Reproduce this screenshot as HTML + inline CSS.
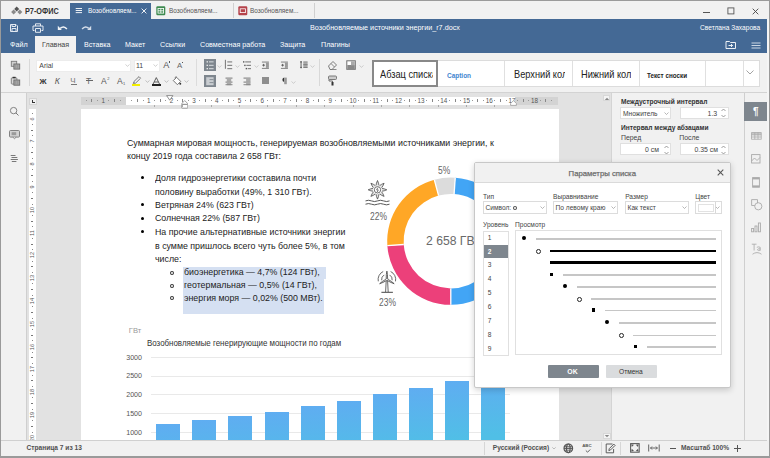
<!DOCTYPE html>
<html><head><meta charset="utf-8">
<style>
*{margin:0;padding:0;box-sizing:border-box}
html,body{width:770px;height:458px;overflow:hidden;background:#f1f1f1;font-family:"Liberation Sans",sans-serif;position:relative}
.a{position:absolute}
.t{position:absolute;white-space:nowrap;line-height:1}
</style></head><body>
<div class="a" style="left:0px;top:0px;width:770px;height:19px;background:#f1f1f1;"></div>
<div class="a" style="left:0px;top:0px;width:770px;height:1px;background:#9a9a9a;"></div>
<svg class="a" style="left:10px;top:5px;" width="14" height="11" viewBox="0 0 14 11"><path d="M6.7 1.5 L9.2 4 L6.7 6.5 L4.2 4Z" fill="#555"/><path d="M3.6 4.6 L6.1 7.1 L3.6 9.6 L1.1 7.1Z" fill="#8a8a8a"/><path d="M9.8 4.6 L12.3 7.1 L9.8 9.6 L7.3 7.1Z" fill="#8a8a8a"/></svg>
<div class="t" style="left:24.5px;top:7.00px;font-size:8.4px;color:#333;font-weight:700;transform:scaleX(0.87);transform-origin:0 0;">Р7-ОФИС</div>
<div class="a" style="left:70px;top:3px;width:81px;height:16px;background:#446995;"></div>
<svg class="a" style="left:75px;top:7px;" width="8" height="7" viewBox="0 0 8 7"><rect x="0.7" y="1" width="6.3" height="0.9" fill="#fff"/><rect x="0.7" y="3.1" width="6.3" height="0.9" fill="#fff"/><rect x="0.7" y="5.2" width="6.3" height="0.9" fill="#fff"/></svg>
<div class="t" style="left:87.5px;top:8.00px;font-size:6.8px;color:#fff;font-weight:400;transform:scaleX(0.94);transform-origin:0 0;">Возобновляем...</div>
<svg class="a" style="left:141px;top:8px;" width="6" height="6" viewBox="0 0 6 6"><path d="M0.6 0.6L5.4 5.4M5.4 0.6L0.6 5.4" stroke="#fff" stroke-width="0.9"/></svg>
<svg class="a" style="left:156px;top:6px;" width="10" height="10" viewBox="0 0 10 10"><rect x="0.3" y="0.3" width="9" height="9" rx="1.2" fill="#3e8a50"/><g fill="none" stroke="#fff" stroke-width="0.8"><rect x="2" y="2.5" width="5.6" height="4.6"/><path d="M2 4.8H7.6M4.8 2.5V7.1"/></g></svg>
<div class="t" style="left:168.8px;top:8.00px;font-size:6.8px;color:#555;font-weight:400;transform:scaleX(0.94);transform-origin:0 0;">Возобновляем...</div>
<div class="a" style="left:233px;top:3px;width:1px;height:15px;background:#d0d0d0;"></div>
<svg class="a" style="left:237.5px;top:6px;" width="10" height="10" viewBox="0 0 10 10"><rect x="0.3" y="0.3" width="9" height="9" rx="1.2" fill="#b5434b"/><rect x="2.2" y="2.8" width="5.2" height="3.8" fill="none" stroke="#fff" stroke-width="0.8"/></svg>
<div class="t" style="left:250.3px;top:8.00px;font-size:6.8px;color:#555;font-weight:400;transform:scaleX(0.94);transform-origin:0 0;">Возобновляем...</div>
<div class="a" style="left:314px;top:3px;width:1px;height:15px;background:#d0d0d0;"></div>
<div class="a" style="left:703px;top:11.5px;width:6.5px;height:0.9px;background:#555;"></div>
<svg class="a" style="left:727px;top:6.5px;" width="8" height="8" viewBox="0 0 8 8"><rect x="0.9" y="0.9" width="6" height="6" fill="none" stroke="#555" stroke-width="0.9"/></svg>
<svg class="a" style="left:752px;top:7.5px;" width="7" height="7" viewBox="0 0 7 7"><path d="M0.7 0.7L6.3 6.3M6.3 0.7L0.7 6.3" stroke="#444" stroke-width="0.9"/></svg>
<div class="a" style="left:0px;top:0px;width:1px;height:458px;background:#9a9a9a;"></div>
<div class="a" style="left:769px;top:0px;width:1px;height:458px;background:#9a9a9a;"></div>
<div class="a" style="left:767px;top:19px;width:2px;height:421px;background:#f5f5f5;"></div>
<div class="a" style="left:1px;top:19px;width:766px;height:34px;background:#446995;"></div>
<svg class="a" style="left:9px;top:23px;" width="10" height="10" viewBox="0 0 10 10"><g fill="none" stroke="#e3e9f1" stroke-width="1"><path d="M1.5 1.5H7L8.5 3V8.5H1.5Z"/><path d="M3 1.5V3.5H6.5V1.5"/><path d="M3 8.5V5.5H7V8.5"/></g></svg>
<svg class="a" style="left:32px;top:23px;" width="13" height="10" viewBox="0 0 13 10"><g fill="none" stroke="#e3e9f1" stroke-width="1"><path d="M3.5 3V0.8H8.5V3"/><path d="M2.5 7.5H1V3H11V7.5H9.5"/><path d="M3.5 5.5H8.5V9.3H3.5Z"/></g></svg>
<svg class="a" style="left:57px;top:25px;" width="11" height="6" viewBox="0 0 11 6"><path d="M3.2 3.4 Q6.6 0.2 9.9 3.9" fill="none" stroke="#f0f3f7" stroke-width="1.5"/><path d="M0.8 0.8 L0.8 4.9 L4.8 4.9Z" fill="#f0f3f7"/></svg>
<svg class="a" style="left:81px;top:25px;" width="11" height="6" viewBox="0 0 11 6"><path d="M7.8 3.4 Q4.4 0.2 1.1 3.9" fill="none" stroke="#d3dce8" stroke-width="1.5"/><path d="M10.2 0.8 L10.2 4.9 L6.2 4.9Z" fill="#d3dce8"/></svg>
<div class="t" style="left:310px;top:24.00px;font-size:7.22px;color:#fff;font-weight:400;">Возобновляемые источники энергии_r7.docx</div>
<div class="t" style="left:700px;top:25.00px;font-size:6.6px;color:#fff;font-weight:400;">Светлана Захарова</div>
<div class="a" style="left:35px;top:36px;width:41px;height:17px;background:#f1f1f1;"></div>
<div class="t" style="left:9.7px;top:41.00px;font-size:7.6px;color:#fff;font-weight:400;transform:scaleX(0.94);transform-origin:0 0;">Файл</div>
<div class="t" style="left:41.8px;top:41.00px;font-size:7.6px;color:#444;font-weight:400;transform:scaleX(0.94);transform-origin:0 0;">Главная</div>
<div class="t" style="left:83.5px;top:41.00px;font-size:7.6px;color:#fff;font-weight:400;transform:scaleX(0.94);transform-origin:0 0;">Вставка</div>
<div class="t" style="left:125px;top:41.00px;font-size:7.6px;color:#fff;font-weight:400;transform:scaleX(0.94);transform-origin:0 0;">Макет</div>
<div class="t" style="left:160px;top:41.00px;font-size:7.6px;color:#fff;font-weight:400;transform:scaleX(0.94);transform-origin:0 0;">Ссылки</div>
<div class="t" style="left:200px;top:41.00px;font-size:7.6px;color:#fff;font-weight:400;transform:scaleX(0.94);transform-origin:0 0;">Совместная работа</div>
<div class="t" style="left:280px;top:41.00px;font-size:7.6px;color:#fff;font-weight:400;transform:scaleX(0.94);transform-origin:0 0;">Защита</div>
<div class="t" style="left:320.5px;top:41.00px;font-size:7.6px;color:#fff;font-weight:400;transform:scaleX(0.94);transform-origin:0 0;">Плагины</div>
<svg class="a" style="left:725px;top:40px;" width="12" height="10" viewBox="0 0 12 10"><path d="M1 1.5H4.5L5.5 2.5H10.5V8.5H1Z" fill="none" stroke="#fff" stroke-width="0.9"/><path d="M3.5 5.5H7.5M6 4L7.5 5.5L6 7" fill="none" stroke="#fff" stroke-width="0.9"/></svg>
<svg class="a" style="left:750.5px;top:41.5px;" width="10" height="8" viewBox="0 0 10 8"><path d="M0.5 1H9.5M0.5 3.5H9.5M0.5 6H9.5" stroke="#eef2f7" stroke-width="0.8"/></svg>
<div class="a" style="left:1px;top:53px;width:766px;height:39px;background:#f1f1f1;"></div>
<div class="a" style="left:1px;top:92px;width:766px;height:1px;background:#d3d3d3;"></div>
<svg class="a" style="left:10px;top:60px;" width="11" height="10" viewBox="0 0 11 10"><rect x="1.3" y="1.3" width="5.4" height="5" fill="#d0d0d0" stroke="#7a7a7a" stroke-width="0.9"/><rect x="3.9" y="4" width="5.8" height="5.1" fill="#a8a8a8" stroke="#6a6a6a" stroke-width="0.9"/><path d="M5.7 4.5V8.6M7.7 4.5V8.6" stroke="#8a8a8a" stroke-width="0.6"/></svg>
<svg class="a" style="left:10px;top:75.5px;" width="11" height="10" viewBox="0 0 11 10"><rect x="1.3" y="1.8" width="5.6" height="6.3" rx="0.8" fill="#d8d8d8" stroke="#7a7a7a" stroke-width="0.9"/><rect x="2.6" y="0.8" width="3" height="1.4" fill="#333"/><rect x="3.9" y="4" width="5.8" height="5.2" fill="#a8a8a8" stroke="#6a6a6a" stroke-width="0.9"/><path d="M5.7 4.5V8.7M7.7 4.5V8.7" stroke="#8a8a8a" stroke-width="0.6"/></svg>
<div class="a" style="left:29px;top:59px;width:1px;height:27px;background:#d8d8d8;"></div>
<div class="a" style="left:36px;top:59.5px;width:95px;height:12px;background:#fff;border:1px solid #ececec"></div>
<div class="t" style="left:39.3px;top:63.00px;font-size:6.9px;color:#444;font-weight:400;">Arial</div>
<svg class="a" style="left:125px;top:64px;" width="5" height="3" viewBox="0 0 5 3"><path d="M0.5 0.5L2.5 2.3L4.5 0.5" fill="none" stroke="#bbb" stroke-width="0.7"/></svg>
<div class="a" style="left:133.5px;top:59.5px;width:26px;height:12px;background:#fff;border:1px solid #ececec"></div>
<div class="t" style="left:136px;top:63.00px;font-size:6.9px;color:#444;font-weight:400;">11</div>
<svg class="a" style="left:153px;top:64px;" width="5" height="3" viewBox="0 0 5 3"><path d="M0.5 0.5L2.5 2.3L4.5 0.5" fill="none" stroke="#bbb" stroke-width="0.7"/></svg>
<div class="t" style="left:163.3px;top:61.00px;font-size:9px;color:#555;font-weight:400;">A</div>
<div class="a" style="left:168.7px;top:61.4px;width:1.5px;height:1.5px;background:#555;"></div>
<div class="t" style="left:177px;top:62.00px;font-size:7.8px;color:#666;font-weight:400;">A</div>
<div class="a" style="left:182px;top:61.9px;width:1.3px;height:1.3px;background:#555;"></div>
<div class="a" style="left:196px;top:59px;width:1px;height:27px;background:#dcdcdc;"></div>
<div class="t" style="left:39.5px;top:78.00px;font-size:7.8px;color:#333;font-weight:700;">Ж</div>
<div class="t" style="left:54.8px;top:77.00px;font-size:8.5px;color:#555;font-weight:400;font-style:italic">К</div>
<div class="t" style="left:70.3px;top:77.00px;font-size:8px;color:#777;font-weight:400;">Ч</div>
<div class="a" style="left:70.5px;top:83.8px;width:6.2px;height:0.9px;background:#777;"></div>
<div class="t" style="left:86px;top:77.00px;font-size:8.3px;color:#666;font-weight:400;">Т</div>
<div class="a" style="left:85.5px;top:80.2px;width:7.5px;height:0.9px;background:#666;"></div>
<div class="t" style="left:101px;top:77.00px;font-size:8.5px;color:#555;font-weight:400;">A</div>
<div class="t" style="left:107.2px;top:77.00px;font-size:4px;color:#555;font-weight:400;">2</div>
<div class="t" style="left:117px;top:77.00px;font-size:8.5px;color:#555;font-weight:400;">A</div>
<div class="t" style="left:123px;top:82.00px;font-size:4px;color:#555;font-weight:400;">1</div>
<svg class="a" style="left:131px;top:75px;" width="12" height="10" viewBox="0 0 12 10"><path d="M2.6 8.3 L2.9 6.6 L8 1.6 L9.6 3.2 L4.5 8.2 Z" fill="none" stroke="#6e6e6e" stroke-width="0.9"/><path d="M2.2 8.6 L3.2 7.6" stroke="#6e6e6e" stroke-width="0.9"/></svg>
<div class="a" style="left:132.3px;top:84.2px;width:8.2px;height:1.7px;background:#f2ee00;"></div>
<svg class="a" style="left:144.5px;top:80px;" width="5" height="3" viewBox="0 0 5 3"><path d="M0.5 0.5L2.5 2.3L4.5 0.5" fill="none" stroke="#aaa" stroke-width="0.7"/></svg>
<svg class="a" style="left:152px;top:76.8px;" width="9" height="8" viewBox="0 0 9 8"><path d="M0.8 7.6 L4.3 0.6 L7.8 7.6 M2.2 5 H6.4" fill="none" stroke="#555" stroke-width="0.95"/></svg>
<div class="a" style="left:152px;top:84.2px;width:9px;height:1.6px;background:#222;"></div>
<svg class="a" style="left:164px;top:80px;" width="5" height="3" viewBox="0 0 5 3"><path d="M0.5 0.5L2.5 2.3L4.5 0.5" fill="none" stroke="#aaa" stroke-width="0.7"/></svg>
<svg class="a" style="left:171.5px;top:75.5px;" width="11" height="10" viewBox="0 0 11 10"><path d="M1.3 4.6 L4.6 1.3 L8.7 5.4 L5.4 8.7 Z" fill="#fff" stroke="#6e6e6e" stroke-width="0.95"/><path d="M3.3 2.6 Q2.5 0.3 4.8 0.8" fill="none" stroke="#6e6e6e" stroke-width="0.8"/><circle cx="8.3" cy="7.7" r="0.95" fill="#333"/></svg>
<svg class="a" style="left:184px;top:80px;" width="5" height="3" viewBox="0 0 5 3"><path d="M0.5 0.5L2.5 2.3L4.5 0.5" fill="none" stroke="#aaa" stroke-width="0.7"/></svg>
<div class="a" style="left:204px;top:59px;width:12px;height:12px;background:#7e868e;"></div>
<svg class="a" style="left:204px;top:59px;" width="12" height="12" viewBox="0 0 12 12"><g fill="#f4f4f4"><rect x="2.6" y="2.2" width="1.3" height="1.3"/><rect x="2.6" y="5.7" width="1.3" height="1.3"/><rect x="2.6" y="9" width="1.3" height="1.3"/></g><g fill="#d2d6da"><rect x="5" y="2.3" width="4.6" height="1.1"/><rect x="5" y="5.8" width="4.6" height="1.1"/><rect x="5" y="9.1" width="4.6" height="1.1"/></g></svg>
<svg class="a" style="left:216.5px;top:65px;" width="5" height="3" viewBox="0 0 5 3"><path d="M0.5 0.5L2.5 2.3L4.5 0.5" fill="none" stroke="#bbb" stroke-width="0.7"/></svg>
<svg class="a" style="left:224px;top:59px;" width="10" height="12" viewBox="0 0 10 12"><rect x="0.9" y="0.8" width="0.9" height="9" fill="#666"/><g fill="#888"><rect x="3.3" y="2.3" width="4.9" height="1.2"/><rect x="3.3" y="5.8" width="4.9" height="1.2"/><rect x="3.3" y="9" width="4.9" height="1.2"/></g></svg>
<svg class="a" style="left:234.8px;top:65px;" width="5" height="3" viewBox="0 0 5 3"><path d="M0.5 0.5L2.5 2.3L4.5 0.5" fill="none" stroke="#bbb" stroke-width="0.7"/></svg>
<svg class="a" style="left:242px;top:59px;" width="10" height="12" viewBox="0 0 10 12"><g fill="#555"><rect x="1" y="2.2" width="1.4" height="1.4"/><rect x="2.2" y="5.7" width="1.4" height="1.4"/><rect x="3.7" y="8.9" width="1.4" height="1.4"/></g><g fill="#888"><rect x="3.2" y="2.3" width="5.8" height="1.2"/><rect x="4.4" y="5.8" width="4.6" height="1.2"/><rect x="5.8" y="9" width="3.2" height="1.2"/></g></svg>
<svg class="a" style="left:253.5px;top:65px;" width="5" height="3" viewBox="0 0 5 3"><path d="M0.5 0.5L2.5 2.3L4.5 0.5" fill="none" stroke="#bbb" stroke-width="0.7"/></svg>
<svg class="a" style="left:261px;top:61px;" width="8" height="9" viewBox="0 0 8 9"><rect x="0.9" y="0.6" width="7" height="0.9" fill="#777"/><rect x="0.9" y="6.9" width="7" height="0.9" fill="#777"/><rect x="4.9" y="1.5" width="3" height="5.4" fill="#9a9a9a"/><path d="M1.3 4.2H3.9M2.6 2.9V5.5" stroke="#555" stroke-width="0.9"/></svg>
<svg class="a" style="left:280px;top:61px;" width="8" height="9" viewBox="0 0 8 9"><rect x="0.9" y="0.6" width="7" height="0.9" fill="#777"/><rect x="0.9" y="6.9" width="7" height="0.9" fill="#777"/><rect x="4.9" y="1.5" width="3" height="5.4" fill="#9a9a9a"/><path d="M1.3 4.2H3.9M2.6 2.9V5.5" stroke="#555" stroke-width="0.9"/></svg>
<svg class="a" style="left:299.5px;top:61px;" width="9" height="8" viewBox="0 0 9 8"><rect x="0.6" y="0.5" width="0.9" height="6.5" fill="#555"/><circle cx="1.05" cy="0.9" r="0.8" fill="#555"/><circle cx="1.05" cy="6.6" r="0.8" fill="#555"/><rect x="3.3" y="1.3" width="4.3" height="5" fill="#aaa"/><g fill="#777"><rect x="3.3" y="0.5" width="4.3" height="0.9"/><rect x="3.3" y="3.3" width="4.3" height="0.9"/><rect x="3.3" y="6.1" width="4.3" height="0.9"/></g></svg>
<svg class="a" style="left:310px;top:65px;" width="5" height="3" viewBox="0 0 5 3"><path d="M0.5 0.5L2.5 2.3L4.5 0.5" fill="none" stroke="#bbb" stroke-width="0.7"/></svg>
<div class="a" style="left:204px;top:74.5px;width:12px;height:12px;background:#7e868e;"></div>
<svg class="a" style="left:204px;top:74.5px;" width="12" height="12" viewBox="0 0 12 12"><rect x="2.2" y="2.2" width="7.4" height="8" fill="#c9cdd1"/><g fill="#8e959c"><rect x="5.5" y="4" width="4.1" height="1.1"/><rect x="5.5" y="7" width="4.1" height="1.1"/></g></svg>
<svg class="a" style="left:224.5px;top:76.5px;" width="8" height="9" viewBox="0 0 8 9"><rect x="0.5" y="0.6" width="7" height="1" fill="#777"/><rect x="1.8" y="1.6" width="4.4" height="3" fill="#aaa"/><rect x="0.5" y="4.6" width="7" height="1" fill="#777"/><rect x="1.8" y="5.6" width="4.4" height="2.6" fill="#aaa"/><rect x="0.5" y="7.2" width="7" height="1" fill="#888"/></svg>
<svg class="a" style="left:243.3px;top:76.5px;" width="8" height="9" viewBox="0 0 8 9"><rect x="0.5" y="0.6" width="7" height="1" fill="#777"/><rect x="3.1" y="1.6" width="4.4" height="3" fill="#aaa"/><rect x="0.5" y="4.6" width="7" height="1" fill="#777"/><rect x="3.1" y="5.6" width="4.4" height="2.6" fill="#aaa"/><rect x="0.5" y="7.2" width="7" height="1" fill="#888"/></svg>
<div class="a" style="left:262.3px;top:77.4px;width:6.6px;height:6.6px;background:#8e8e8e;"></div>
<svg class="a" style="left:281px;top:76.8px;" width="7" height="8" viewBox="0 0 7 8"><path d="M3.2 0.6 A2.3 2.3 0 0 0 3.2 5.1 Z" fill="#333"/><rect x="3.2" y="0.6" width="2.6" height="6.6" fill="#9a9a9a"/></svg>
<svg class="a" style="left:291px;top:80.5px;" width="5" height="3" viewBox="0 0 5 3"><path d="M0.5 0.5L2.5 2.3L4.5 0.5" fill="none" stroke="#bbb" stroke-width="0.7"/></svg>
<div class="a" style="left:318.5px;top:59px;width:1px;height:27px;background:#d8d8d8;"></div>
<svg class="a" style="left:327px;top:60px;" width="11" height="10" viewBox="0 0 11 10"><path d="M1.5 6 L6 1.5 L9.5 5 L5 9.5 L3 9.5 Z" fill="none" stroke="#6e6e6e" stroke-width="0.9"/><path d="M4 3.5L7.5 7" stroke="#6e6e6e" stroke-width="0.8"/><path d="M5 9.5H9.5" stroke="#6e6e6e" stroke-width="0.8"/></svg>
<svg class="a" style="left:346px;top:60px;" width="10" height="10" viewBox="0 0 10 10"><rect x="0.8" y="0.8" width="8.5" height="8.5" fill="#fff" stroke="#6e6e6e" stroke-width="1"/><rect x="1.3" y="5" width="7.5" height="4" fill="#888"/><rect x="5" y="1.3" width="3.8" height="4" fill="#aaa"/></svg>
<svg class="a" style="left:358.5px;top:64.5px;" width="5" height="3" viewBox="0 0 5 3"><path d="M0.5 0.5L2.5 2.3L4.5 0.5" fill="none" stroke="#bbb" stroke-width="0.7"/></svg>
<svg class="a" style="left:327px;top:75px;" width="11" height="11" viewBox="0 0 11 11"><rect x="1.5" y="1" width="8" height="3.5" rx="1" fill="#ccc" stroke="#6e6e6e" stroke-width="0.9"/><path d="M2 4.5V6H5.5V10" fill="none" stroke="#6e6e6e" stroke-width="1"/><rect x="4.5" y="7" width="2" height="3.5" fill="#333"/></svg>
<div class="a" style="left:371.5px;top:59.5px;width:388px;height:27px;background:#fff;border:1px solid #dcdcdc"></div>
<div class="a" style="left:371.5px;top:59.5px;width:66px;height:27px;border:2px solid #888;background:#fff"></div>
<div class="a" style="left:373.5px;top:61px;width:59.5px;height:24px;overflow:hidden"><div class="t" style="left:6.8px;top:9px;font-size:10.2px;color:#222;transform:scaleX(0.905);transform-origin:0 0">Абзац списка</div></div>
<div class="t" style="left:447px;top:73.00px;font-size:6.6px;color:#3f86d0;font-weight:700;transform:scaleX(0.98);transform-origin:0 0;">Caption</div>
<div class="a" style="left:504px;top:60.5px;width:1px;height:25px;background:#e0e0e0;"></div>
<div class="a" style="left:571.5px;top:60.5px;width:1px;height:25px;background:#e0e0e0;"></div>
<div class="a" style="left:638.5px;top:60.5px;width:1px;height:25px;background:#e0e0e0;"></div>
<div class="a" style="left:705px;top:60.5px;width:1px;height:25px;background:#e0e0e0;"></div>
<div class="a" style="left:742.5px;top:60.5px;width:1px;height:25px;background:#e0e0e0;"></div>
<div class="a" style="left:505px;top:61px;width:60px;height:24px;overflow:hidden"><div class="t" style="left:8.6px;top:9px;font-size:10.2px;color:#222;transform:scaleX(0.905);transform-origin:0 0">Верхний колонтитул</div></div>
<div class="a" style="left:572.5px;top:61px;width:58.5px;height:24px;overflow:hidden"><div class="t" style="left:8px;top:9px;font-size:10.2px;color:#222;transform:scaleX(0.905);transform-origin:0 0">Нижний колонтитул</div></div>
<div class="t" style="left:647px;top:73.00px;font-size:6.3px;color:#222;font-weight:700;">Текст сноски</div>
<svg class="a" style="left:746px;top:70px;" width="8" height="5" viewBox="0 0 8 5"><path d="M0.5 0.5L4 4L7.5 0.5" fill="none" stroke="#999" stroke-width="0.9"/></svg>
<div class="a" style="left:1px;top:93px;width:25px;height:347px;background:#f1f1f1;"></div>
<div class="a" style="left:26px;top:93px;width:1px;height:347px;background:#cfcfcf;"></div>
<svg class="a" style="left:9px;top:106px;" width="11" height="11" viewBox="0 0 11 11"><circle cx="4.6" cy="4.6" r="3.2" fill="none" stroke="#777" stroke-width="0.9"/><path d="M6.9 6.9L9.5 9.5" stroke="#777" stroke-width="1"/></svg>
<svg class="a" style="left:8px;top:129px;" width="13" height="11" viewBox="0 0 13 11"><rect x="1.5" y="1.5" width="10" height="6.6" rx="1" fill="#d2d2d2" stroke="#777" stroke-width="0.9"/><path d="M4.8 8.1L6.5 9.7L8.2 8.1" fill="#d2d2d2" stroke="#777" stroke-width="0.8"/><rect x="3.6" y="3.2" width="4.6" height="3" fill="#9a9a9a"/></svg>
<svg class="a" style="left:9px;top:153px;" width="12" height="11" viewBox="0 0 12 11"><g fill="#6a6a6a"><rect x="1.7" y="2" width="4.8" height="0.9"/><rect x="2.5" y="4" width="5.8" height="0.9"/><rect x="1.7" y="6" width="7.2" height="0.9"/><rect x="2.8" y="8" width="4.6" height="0.9"/></g></svg>
<div class="a" style="left:27px;top:93px;width:585px;height:347px;background:#e2e2e2;"></div>
<div class="a" style="left:29px;top:97.5px;width:7.5px;height:7.5px;background:#f1f1f1;border:1px solid #d4d4d4"></div>
<div class="a" style="left:31.5px;top:100px;width:1px;height:3px;background:#333;"></div>
<div class="a" style="left:31.5px;top:102.3px;width:3px;height:1px;background:#333;"></div>
<div class="a" style="left:29px;top:108.5px;width:6.5px;height:331.5px;background:#fff;"></div>
<div class="a" style="left:29px;top:108.5px;width:6.5px;height:0px;background:#fff;"></div>
<div class="a" style="left:31.7px;top:112.50249999999998px;width:1.2px;height:1px;background:#888;"></div>
<div class="a" style="left:26.20px;top:115.70px;width:12px;height:6px;transform:rotate(-90deg);font-size:5.6px;line-height:6px;text-align:center;color:#555;white-space:nowrap">6</div>
<div class="a" style="left:31.7px;top:123.8975px;width:1.2px;height:1px;background:#888;"></div>
<div class="a" style="left:31.2px;top:129.59499999999997px;width:2.2px;height:1px;background:#777;"></div>
<div class="a" style="left:31.7px;top:135.29249999999996px;width:1.2px;height:1px;background:#888;"></div>
<div class="a" style="left:26.20px;top:138.49px;width:12px;height:6px;transform:rotate(-90deg);font-size:5.6px;line-height:6px;text-align:center;color:#555;white-space:nowrap">7</div>
<div class="a" style="left:31.7px;top:146.6875px;width:1.2px;height:1px;background:#888;"></div>
<div class="a" style="left:31.2px;top:152.385px;width:2.2px;height:1px;background:#777;"></div>
<div class="a" style="left:31.7px;top:158.08249999999998px;width:1.2px;height:1px;background:#888;"></div>
<div class="a" style="left:26.20px;top:161.28px;width:12px;height:6px;transform:rotate(-90deg);font-size:5.6px;line-height:6px;text-align:center;color:#555;white-space:nowrap">8</div>
<div class="a" style="left:31.7px;top:169.47749999999996px;width:1.2px;height:1px;background:#888;"></div>
<div class="a" style="left:31.2px;top:175.175px;width:2.2px;height:1px;background:#777;"></div>
<div class="a" style="left:31.7px;top:180.8725px;width:1.2px;height:1px;background:#888;"></div>
<div class="a" style="left:26.20px;top:184.07px;width:12px;height:6px;transform:rotate(-90deg);font-size:5.6px;line-height:6px;text-align:center;color:#555;white-space:nowrap">9</div>
<div class="a" style="left:31.7px;top:192.26749999999998px;width:1.2px;height:1px;background:#888;"></div>
<div class="a" style="left:31.2px;top:197.96499999999997px;width:2.2px;height:1px;background:#777;"></div>
<div class="a" style="left:31.7px;top:203.66249999999997px;width:1.2px;height:1px;background:#888;"></div>
<div class="a" style="left:26.20px;top:206.86px;width:12px;height:6px;transform:rotate(-90deg);font-size:5.6px;line-height:6px;text-align:center;color:#555;white-space:nowrap">10</div>
<div class="a" style="left:31.7px;top:215.0575px;width:1.2px;height:1px;background:#888;"></div>
<div class="a" style="left:31.2px;top:220.755px;width:2.2px;height:1px;background:#777;"></div>
<div class="a" style="left:31.7px;top:226.4525px;width:1.2px;height:1px;background:#888;"></div>
<div class="a" style="left:26.20px;top:229.65px;width:12px;height:6px;transform:rotate(-90deg);font-size:5.6px;line-height:6px;text-align:center;color:#555;white-space:nowrap">11</div>
<div class="a" style="left:31.7px;top:237.84749999999997px;width:1.2px;height:1px;background:#888;"></div>
<div class="a" style="left:31.2px;top:243.54499999999996px;width:2.2px;height:1px;background:#777;"></div>
<div class="a" style="left:31.7px;top:249.24249999999995px;width:1.2px;height:1px;background:#888;"></div>
<div class="a" style="left:26.20px;top:252.44px;width:12px;height:6px;transform:rotate(-90deg);font-size:5.6px;line-height:6px;text-align:center;color:#555;white-space:nowrap">12</div>
<div class="a" style="left:31.7px;top:260.6375px;width:1.2px;height:1px;background:#888;"></div>
<div class="a" style="left:31.2px;top:266.335px;width:2.2px;height:1px;background:#777;"></div>
<div class="a" style="left:31.7px;top:272.03249999999997px;width:1.2px;height:1px;background:#888;"></div>
<div class="a" style="left:26.20px;top:275.23px;width:12px;height:6px;transform:rotate(-90deg);font-size:5.6px;line-height:6px;text-align:center;color:#555;white-space:nowrap">13</div>
<div class="a" style="left:31.7px;top:283.42749999999995px;width:1.2px;height:1px;background:#888;"></div>
<div class="a" style="left:31.2px;top:289.12499999999994px;width:2.2px;height:1px;background:#777;"></div>
<div class="a" style="left:31.7px;top:294.8225px;width:1.2px;height:1px;background:#888;"></div>
<div class="a" style="left:26.20px;top:298.02px;width:12px;height:6px;transform:rotate(-90deg);font-size:5.6px;line-height:6px;text-align:center;color:#555;white-space:nowrap">14</div>
<div class="a" style="left:31.7px;top:306.2175px;width:1.2px;height:1px;background:#888;"></div>
<div class="a" style="left:31.2px;top:311.91499999999996px;width:2.2px;height:1px;background:#777;"></div>
<div class="a" style="left:31.7px;top:317.61249999999995px;width:1.2px;height:1px;background:#888;"></div>
<div class="a" style="left:26.20px;top:320.81px;width:12px;height:6px;transform:rotate(-90deg);font-size:5.6px;line-height:6px;text-align:center;color:#555;white-space:nowrap">15</div>
<div class="a" style="left:31.7px;top:329.0075px;width:1.2px;height:1px;background:#888;"></div>
<div class="a" style="left:31.2px;top:334.705px;width:2.2px;height:1px;background:#777;"></div>
<div class="a" style="left:31.7px;top:340.4025px;width:1.2px;height:1px;background:#888;"></div>
<div class="a" style="left:26.20px;top:343.60px;width:12px;height:6px;transform:rotate(-90deg);font-size:5.6px;line-height:6px;text-align:center;color:#555;white-space:nowrap">16</div>
<div class="a" style="left:31.7px;top:351.79749999999996px;width:1.2px;height:1px;background:#888;"></div>
<div class="a" style="left:31.2px;top:357.49499999999995px;width:2.2px;height:1px;background:#777;"></div>
<div class="a" style="left:31.7px;top:363.19249999999994px;width:1.2px;height:1px;background:#888;"></div>
<div class="a" style="left:26.20px;top:366.39px;width:12px;height:6px;transform:rotate(-90deg);font-size:5.6px;line-height:6px;text-align:center;color:#555;white-space:nowrap">17</div>
<div class="a" style="left:31.7px;top:374.5875px;width:1.2px;height:1px;background:#888;"></div>
<div class="a" style="left:31.2px;top:380.28499999999997px;width:2.2px;height:1px;background:#777;"></div>
<div class="a" style="left:31.7px;top:385.98249999999996px;width:1.2px;height:1px;background:#888;"></div>
<div class="a" style="left:26.20px;top:389.18px;width:12px;height:6px;transform:rotate(-90deg);font-size:5.6px;line-height:6px;text-align:center;color:#555;white-space:nowrap">18</div>
<div class="a" style="left:31.7px;top:397.37749999999994px;width:1.2px;height:1px;background:#888;"></div>
<div class="a" style="left:31.2px;top:403.075px;width:2.2px;height:1px;background:#777;"></div>
<div class="a" style="left:31.7px;top:408.7725px;width:1.2px;height:1px;background:#888;"></div>
<div class="a" style="left:26.20px;top:411.97px;width:12px;height:6px;transform:rotate(-90deg);font-size:5.6px;line-height:6px;text-align:center;color:#555;white-space:nowrap">19</div>
<div class="a" style="left:31.7px;top:420.16749999999996px;width:1.2px;height:1px;background:#888;"></div>
<div class="a" style="left:31.2px;top:425.86499999999995px;width:2.2px;height:1px;background:#777;"></div>
<div class="a" style="left:31.7px;top:431.56249999999994px;width:1.2px;height:1px;background:#888;"></div>
<div class="a" style="left:26.20px;top:434.76px;width:12px;height:6px;transform:rotate(-90deg);font-size:5.6px;line-height:6px;text-align:center;color:#555;white-space:nowrap">20</div>
<div class="a" style="left:81px;top:108.5px;width:477.5px;height:332px;background:#fff;"></div>
<div class="a" style="left:81px;top:97px;width:477px;height:7.5px;background:#fff;"></div>
<div class="a" style="left:81px;top:97px;width:45px;height:7.5px;background:#d3d3d3;"></div>
<div class="a" style="left:515px;top:97px;width:43px;height:7.5px;background:#d3d3d3;"></div>
<div class="a" style="left:85.775px;top:100.3px;width:1px;height:1px;background:#999;"></div>
<div class="a" style="left:91.45px;top:99.3px;width:1px;height:3px;background:#888;"></div>
<div class="a" style="left:97.125px;top:100.3px;width:1px;height:1px;background:#999;"></div>
<div class="t" style="left:98.30px;top:98px;width:10px;text-align:center;font-size:6.3px;color:#555">1</div>
<div class="a" style="left:108.475px;top:100.3px;width:1px;height:1px;background:#999;"></div>
<div class="a" style="left:114.15px;top:99.3px;width:1px;height:3px;background:#888;"></div>
<div class="a" style="left:119.825px;top:100.3px;width:1px;height:1px;background:#999;"></div>
<div class="a" style="left:131.175px;top:100.3px;width:1px;height:1px;background:#999;"></div>
<div class="a" style="left:136.85px;top:99.3px;width:1px;height:3px;background:#888;"></div>
<div class="a" style="left:142.525px;top:100.3px;width:1px;height:1px;background:#999;"></div>
<div class="t" style="left:143.70px;top:98px;width:10px;text-align:center;font-size:6.3px;color:#555">1</div>
<div class="a" style="left:153.875px;top:100.3px;width:1px;height:1px;background:#999;"></div>
<div class="a" style="left:159.55px;top:99.3px;width:1px;height:3px;background:#888;"></div>
<div class="a" style="left:165.225px;top:100.3px;width:1px;height:1px;background:#999;"></div>
<div class="t" style="left:166.40px;top:98px;width:10px;text-align:center;font-size:6.3px;color:#555">2</div>
<div class="a" style="left:176.575px;top:100.3px;width:1px;height:1px;background:#999;"></div>
<div class="a" style="left:182.25px;top:99.3px;width:1px;height:3px;background:#888;"></div>
<div class="a" style="left:187.925px;top:100.3px;width:1px;height:1px;background:#999;"></div>
<div class="t" style="left:189.10px;top:98px;width:10px;text-align:center;font-size:6.3px;color:#555">3</div>
<div class="a" style="left:199.27499999999998px;top:100.3px;width:1px;height:1px;background:#999;"></div>
<div class="a" style="left:204.95px;top:99.3px;width:1px;height:3px;background:#888;"></div>
<div class="a" style="left:210.625px;top:100.3px;width:1px;height:1px;background:#999;"></div>
<div class="t" style="left:211.80px;top:98px;width:10px;text-align:center;font-size:6.3px;color:#555">4</div>
<div class="a" style="left:221.975px;top:100.3px;width:1px;height:1px;background:#999;"></div>
<div class="a" style="left:227.64999999999998px;top:99.3px;width:1px;height:3px;background:#888;"></div>
<div class="a" style="left:233.325px;top:100.3px;width:1px;height:1px;background:#999;"></div>
<div class="t" style="left:234.50px;top:98px;width:10px;text-align:center;font-size:6.3px;color:#555">5</div>
<div class="a" style="left:244.675px;top:100.3px;width:1px;height:1px;background:#999;"></div>
<div class="a" style="left:250.35px;top:99.3px;width:1px;height:3px;background:#888;"></div>
<div class="a" style="left:256.025px;top:100.3px;width:1px;height:1px;background:#999;"></div>
<div class="t" style="left:257.20px;top:98px;width:10px;text-align:center;font-size:6.3px;color:#555">6</div>
<div class="a" style="left:267.375px;top:100.3px;width:1px;height:1px;background:#999;"></div>
<div class="a" style="left:273.04999999999995px;top:99.3px;width:1px;height:3px;background:#888;"></div>
<div class="a" style="left:278.725px;top:100.3px;width:1px;height:1px;background:#999;"></div>
<div class="t" style="left:279.90px;top:98px;width:10px;text-align:center;font-size:6.3px;color:#555">7</div>
<div class="a" style="left:290.075px;top:100.3px;width:1px;height:1px;background:#999;"></div>
<div class="a" style="left:295.75px;top:99.3px;width:1px;height:3px;background:#888;"></div>
<div class="a" style="left:301.42499999999995px;top:100.3px;width:1px;height:1px;background:#999;"></div>
<div class="t" style="left:302.60px;top:98px;width:10px;text-align:center;font-size:6.3px;color:#555">8</div>
<div class="a" style="left:312.775px;top:100.3px;width:1px;height:1px;background:#999;"></div>
<div class="a" style="left:318.45px;top:99.3px;width:1px;height:3px;background:#888;"></div>
<div class="a" style="left:324.125px;top:100.3px;width:1px;height:1px;background:#999;"></div>
<div class="t" style="left:325.30px;top:98px;width:10px;text-align:center;font-size:6.3px;color:#555">9</div>
<div class="a" style="left:335.475px;top:100.3px;width:1px;height:1px;background:#999;"></div>
<div class="a" style="left:341.15px;top:99.3px;width:1px;height:3px;background:#888;"></div>
<div class="a" style="left:346.825px;top:100.3px;width:1px;height:1px;background:#999;"></div>
<div class="t" style="left:348.00px;top:98px;width:10px;text-align:center;font-size:6.3px;color:#555">10</div>
<div class="a" style="left:358.17499999999995px;top:100.3px;width:1px;height:1px;background:#999;"></div>
<div class="a" style="left:363.85px;top:99.3px;width:1px;height:3px;background:#888;"></div>
<div class="a" style="left:369.525px;top:100.3px;width:1px;height:1px;background:#999;"></div>
<div class="t" style="left:370.70px;top:98px;width:10px;text-align:center;font-size:6.3px;color:#555">11</div>
<div class="a" style="left:380.875px;top:100.3px;width:1px;height:1px;background:#999;"></div>
<div class="a" style="left:386.55px;top:99.3px;width:1px;height:3px;background:#888;"></div>
<div class="a" style="left:392.22499999999997px;top:100.3px;width:1px;height:1px;background:#999;"></div>
<div class="t" style="left:393.40px;top:98px;width:10px;text-align:center;font-size:6.3px;color:#555">12</div>
<div class="a" style="left:403.575px;top:100.3px;width:1px;height:1px;background:#999;"></div>
<div class="a" style="left:409.25px;top:99.3px;width:1px;height:3px;background:#888;"></div>
<div class="a" style="left:414.925px;top:100.3px;width:1px;height:1px;background:#999;"></div>
<div class="t" style="left:416.10px;top:98px;width:10px;text-align:center;font-size:6.3px;color:#555">13</div>
<div class="a" style="left:426.275px;top:100.3px;width:1px;height:1px;background:#999;"></div>
<div class="a" style="left:431.95px;top:99.3px;width:1px;height:3px;background:#888;"></div>
<div class="a" style="left:437.625px;top:100.3px;width:1px;height:1px;background:#999;"></div>
<div class="t" style="left:438.80px;top:98px;width:10px;text-align:center;font-size:6.3px;color:#555">14</div>
<div class="a" style="left:448.97499999999997px;top:100.3px;width:1px;height:1px;background:#999;"></div>
<div class="a" style="left:454.65px;top:99.3px;width:1px;height:3px;background:#888;"></div>
<div class="a" style="left:460.325px;top:100.3px;width:1px;height:1px;background:#999;"></div>
<div class="t" style="left:461.50px;top:98px;width:10px;text-align:center;font-size:6.3px;color:#555">15</div>
<div class="a" style="left:471.675px;top:100.3px;width:1px;height:1px;background:#999;"></div>
<div class="a" style="left:477.34999999999997px;top:99.3px;width:1px;height:3px;background:#888;"></div>
<div class="a" style="left:483.025px;top:100.3px;width:1px;height:1px;background:#999;"></div>
<div class="t" style="left:484.20px;top:98px;width:10px;text-align:center;font-size:6.3px;color:#555">16</div>
<div class="a" style="left:494.375px;top:100.3px;width:1px;height:1px;background:#999;"></div>
<div class="a" style="left:500.05px;top:99.3px;width:1px;height:3px;background:#888;"></div>
<div class="a" style="left:505.72499999999997px;top:100.3px;width:1px;height:1px;background:#999;"></div>
<div class="t" style="left:506.90px;top:98px;width:10px;text-align:center;font-size:6.3px;color:#555">17</div>
<div class="a" style="left:517.075px;top:100.3px;width:1px;height:1px;background:#999;"></div>
<div class="a" style="left:522.75px;top:99.3px;width:1px;height:3px;background:#888;"></div>
<div class="a" style="left:528.425px;top:100.3px;width:1px;height:1px;background:#999;"></div>
<div class="t" style="left:529.60px;top:98px;width:10px;text-align:center;font-size:6.3px;color:#555">18</div>
<div class="a" style="left:539.775px;top:100.3px;width:1px;height:1px;background:#999;"></div>
<div class="a" style="left:545.45px;top:99.3px;width:1px;height:3px;background:#888;"></div>
<div class="a" style="left:551.125px;top:100.3px;width:1px;height:1px;background:#999;"></div>
<svg class="a" style="left:165.5px;top:95px;" width="8" height="6" viewBox="0 0 8 6"><path d="M0.6 0.6H6.9L3.75 5.2Z" fill="#fff" stroke="#777" stroke-width="0.8"/></svg>
<svg class="a" style="left:180.5px;top:100px;" width="7.5" height="9" viewBox="0 0 7.5 9"><path d="M3.75 0.6L6.8 3.6V4.3H0.7V3.6Z" fill="#fff" stroke="#888" stroke-width="0.8"/><rect x="0.7" y="4.5" width="6.1" height="3.7" rx="0.6" fill="#fff" stroke="#888" stroke-width="0.8"/></svg>
<div class="a" style="left:153.88px;top:105.2px;width:1px;height:1.8px;background:#aaa;"></div>
<div class="a" style="left:182.25px;top:105.2px;width:1px;height:1.8px;background:#aaa;"></div>
<div class="a" style="left:210.62px;top:105.2px;width:1px;height:1.8px;background:#aaa;"></div>
<div class="a" style="left:239.0px;top:105.2px;width:1px;height:1.8px;background:#aaa;"></div>
<div class="a" style="left:267.38px;top:105.2px;width:1px;height:1.8px;background:#aaa;"></div>
<div class="a" style="left:295.75px;top:105.2px;width:1px;height:1.8px;background:#aaa;"></div>
<div class="a" style="left:324.12px;top:105.2px;width:1px;height:1.8px;background:#aaa;"></div>
<div class="a" style="left:352.5px;top:105.2px;width:1px;height:1.8px;background:#aaa;"></div>
<div class="a" style="left:380.88px;top:105.2px;width:1px;height:1.8px;background:#aaa;"></div>
<div class="a" style="left:409.25px;top:105.2px;width:1px;height:1.8px;background:#aaa;"></div>
<div class="a" style="left:437.62px;top:105.2px;width:1px;height:1.8px;background:#aaa;"></div>
<div class="a" style="left:466.0px;top:105.2px;width:1px;height:1.8px;background:#aaa;"></div>
<div class="a" style="left:494.38px;top:105.2px;width:1px;height:1.8px;background:#aaa;"></div>
<svg class="a" style="left:509.5px;top:99.5px;" width="7" height="6" viewBox="0 0 7 6"><path d="M3.5 0.6L6.4 3.5V5.4H0.6V3.5Z" fill="#fff" stroke="#999" stroke-width="0.8"/></svg>
<div class="t" style="left:126.6px;top:138.00px;font-size:9.8px;color:#222;font-weight:400;transform:scaleX(0.9);transform-origin:0 0;">Суммарная мировая мощность, генерируемая возобновляемыми источниками энергии, к</div>
<div class="t" style="left:126.6px;top:151.00px;font-size:9.8px;color:#222;font-weight:400;transform:scaleX(0.9);transform-origin:0 0;">концу 2019 года составила 2 658 ГВт:</div>
<div class="a" style="left:140.6px;top:176.30px;width:3.1px;height:3.1px;border-radius:50%;background:#000"></div>
<div class="t" style="left:154.6px;top:173.00px;font-size:9.8px;color:#222;font-weight:400;transform:scaleX(0.9);transform-origin:0 0;">Доля гидроэнергетики составила почти</div>
<div class="t" style="left:154.6px;top:187.00px;font-size:9.8px;color:#222;font-weight:400;transform:scaleX(0.9);transform-origin:0 0;">половину выработки (49%, 1 310 ГВт).</div>
<div class="a" style="left:140.6px;top:203.10px;width:3.1px;height:3.1px;border-radius:50%;background:#000"></div>
<div class="t" style="left:154.6px;top:200.00px;font-size:9.8px;color:#222;font-weight:400;transform:scaleX(0.9);transform-origin:0 0;">Ветряная 24% (623 ГВт)</div>
<div class="a" style="left:140.6px;top:216.50px;width:3.1px;height:3.1px;border-radius:50%;background:#000"></div>
<div class="t" style="left:154.6px;top:213.00px;font-size:9.8px;color:#222;font-weight:400;transform:scaleX(0.9);transform-origin:0 0;">Солнечная 22% (587 ГВт)</div>
<div class="a" style="left:140.6px;top:230.00px;width:3.1px;height:3.1px;border-radius:50%;background:#000"></div>
<div class="t" style="left:154.6px;top:227.00px;font-size:9.8px;color:#222;font-weight:400;transform:scaleX(0.9);transform-origin:0 0;">На прочие альтернативные источники энергии</div>
<div class="t" style="left:154.6px;top:241.00px;font-size:9.8px;color:#222;font-weight:400;transform:scaleX(0.9);transform-origin:0 0;">в сумме пришлось всего чуть более 5%, в том</div>
<div class="t" style="left:154.6px;top:254.00px;font-size:9.8px;color:#222;font-weight:400;transform:scaleX(0.9);transform-origin:0 0;">числе:</div>
<div class="a" style="left:183px;top:266.5px;width:140.5px;height:47.5px;background:#d5e0f2;"></div>
<div class="a" style="left:323.5px;top:266.5px;width:2px;height:12px;background:#d5e0f2;"></div>
<div class="a" style="left:169.6px;top:270.90px;width:4.2px;height:4px;border-radius:50%;border:0.8px solid #333"></div>
<div class="t" style="left:183.6px;top:267.00px;font-size:9.8px;color:#222;font-weight:400;transform:scaleX(0.9);transform-origin:0 0;">биоэнергетика — 4,7% (124 ГВт),</div>
<div class="a" style="left:169.6px;top:283.60px;width:4.2px;height:4px;border-radius:50%;border:0.8px solid #333"></div>
<div class="t" style="left:183.6px;top:280.00px;font-size:9.8px;color:#222;font-weight:400;transform:scaleX(0.9);transform-origin:0 0;">геотермальная — 0,5% (14 ГВт),</div>
<div class="a" style="left:169.6px;top:296.30px;width:4.2px;height:4px;border-radius:50%;border:0.8px solid #333"></div>
<div class="t" style="left:183.6px;top:293.00px;font-size:9.8px;color:#222;font-weight:400;transform:scaleX(0.9);transform-origin:0 0;">энергия моря — 0,02% (500 МВт).</div>
<svg class="a" style="left:360px;top:170px;" width="120" height="145" viewBox="0 0 120 145"><path d="M95.24 7.75 A63.6 63.6 0 0 1 90.80 134.80 L90.80 118.40 A47.2 47.2 0 0 0 94.09 24.11Z" fill="#42a5f5"/><path d="M90.80 134.80 A63.6 63.6 0 0 1 27.35 75.64 L43.71 74.49 A47.2 47.2 0 0 0 90.80 118.40Z" fill="#ec407a"/><path d="M27.35 75.64 A63.6 63.6 0 0 1 74.34 9.77 L78.58 25.61 A47.2 47.2 0 0 0 43.71 74.49Z" fill="#ffa726"/><path d="M74.34 9.77 A63.6 63.6 0 0 1 95.24 7.75 L94.09 24.11 A47.2 47.2 0 0 0 78.58 25.61Z" fill="#dcdcdc"/><path d="M94.09 24.11 L95.24 7.75" stroke="#fff" stroke-width="1.3"/><path d="M90.80 118.40 L90.80 134.80" stroke="#fff" stroke-width="1.3"/><path d="M43.71 74.49 L27.35 75.64" stroke="#fff" stroke-width="1.3"/><path d="M78.58 25.61 L74.34 9.77" stroke="#fff" stroke-width="1.3"/></svg>
<div class="t" style="left:425.5px;top:235.00px;font-size:12.3px;color:#6a6a6a;font-weight:400;transform:scaleX(0.99);transform-origin:0 0;">2 658 ГВт</div>
<div class="t" style="left:437.5px;top:166.00px;font-size:10.3px;color:#666;font-weight:400;transform:scaleX(0.82);transform-origin:0 0;">5%</div>
<div class="t" style="left:370.4px;top:212.00px;font-size:10.3px;color:#666;font-weight:400;transform:scaleX(0.82);transform-origin:0 0;">22%</div>
<div class="t" style="left:379.2px;top:298.00px;font-size:10.3px;color:#666;font-weight:400;transform:scaleX(0.82);transform-origin:0 0;">23%</div>
<svg class="a" style="left:365px;top:180px;" width="26" height="26" viewBox="0 0 26 26"><g fill="none" stroke="#444" stroke-width="0.75"><circle cx="12.5" cy="9.8" r="3.2"/><path d="M13.95 5.43 Q13.81 3.33 12.50 0.50 Q11.19 3.33 11.05 5.43" fill="#ddd"/><path d="M16.61 7.74 Q18.00 6.15 19.08 3.22 Q16.15 4.30 14.56 5.69" fill="#ddd"/><path d="M16.87 11.25 Q18.97 11.11 21.80 9.80 Q18.97 8.49 16.87 8.35" fill="#ddd"/><path d="M14.56 13.91 Q16.15 15.30 19.08 16.38 Q18.00 13.45 16.61 11.86" fill="#ddd"/><path d="M11.05 14.17 Q11.19 16.27 12.50 19.10 Q13.81 16.27 13.95 14.17" fill="#ddd"/><path d="M8.39 11.86 Q7.00 13.45 5.92 16.38 Q8.85 15.30 10.44 13.91" fill="#ddd"/><path d="M8.13 8.35 Q6.03 8.49 3.20 9.80 Q6.03 11.11 8.13 11.25" fill="#ddd"/><path d="M10.44 5.69 Q8.85 4.30 5.92 3.22 Q7.00 6.15 8.39 7.74" fill="#ddd"/><path d="M12.9 7.6 L11.6 9.9 L13.3 9.9 L12.1 12.2" stroke-width="0.7"/><path d="M0.5 20.9 Q3.5 19.6 6.5 20.9 T12.5 20.9 T18.5 20.9 T24.5 20.9" stroke-width="0.9"/><path d="M0.5 24.2 Q3.5 22.9 6.5 24.2 T12.5 24.2 T18.5 24.2 T24.5 24.2" stroke-width="0.9"/></g></svg>
<svg class="a" style="left:377px;top:270px;" width="20" height="24" viewBox="0 0 20 24"><g fill="none" stroke="#444" stroke-width="0.8"><path d="M1.29 11.33 A8.8 8.8 0 0 1 6.18 1.52"/><path d="M13.62 1.52 A8.8 8.8 0 0 1 18.51 11.33"/><path d="M4.65 10.24 A5.3 5.3 0 0 1 7.25 4.91"/><path d="M12.55 4.91 A5.3 5.3 0 0 1 15.15 10.24"/><circle cx="9.9" cy="9.5" r="1.3" fill="#fff"/><path d="M9.22 8.05 Q9.12 4.56 9.90 1.10 Q10.68 4.56 10.58 8.05" fill="#e6e6e6"/><path d="M11.49 9.64 Q14.57 11.29 17.17 13.70 Q13.79 12.65 10.82 10.81" fill="#e6e6e6"/><path d="M8.98 10.81 Q6.01 12.65 2.63 13.70 Q5.23 11.29 8.31 9.64" fill="#e6e6e6"/><path d="M9.2 11 L8.6 22 M10.6 11 L11.2 22" /><path d="M4.4 22.3 H15.9" stroke-width="1"/></g></svg>
<div class="t" style="left:128.8px;top:327.00px;font-size:7.6px;color:#999;font-weight:400;">ГВт</div>
<div class="t" style="left:146.6px;top:339.00px;font-size:8.6px;color:#333;font-weight:400;transform:scaleX(0.922);transform-origin:0 0;">Возобновляемые генерирующие мощности по годам</div>
<div class="a" style="left:150.6px;top:356.7px;width:359.5px;height:1px;background:#e9e9e9;"></div>
<div class="t" style="left:126.2px;top:355.00px;font-size:7.1px;color:#555;font-weight:400;">3000</div>
<div class="a" style="left:150.6px;top:375.6px;width:359.5px;height:1px;background:#e9e9e9;"></div>
<div class="t" style="left:126.2px;top:373.00px;font-size:7.1px;color:#555;font-weight:400;">2500</div>
<div class="a" style="left:150.6px;top:394.4px;width:359.5px;height:1px;background:#e9e9e9;"></div>
<div class="t" style="left:126.2px;top:392.00px;font-size:7.1px;color:#555;font-weight:400;">2000</div>
<div class="a" style="left:150.6px;top:413.3px;width:359.5px;height:1px;background:#e9e9e9;"></div>
<div class="t" style="left:126.2px;top:411.00px;font-size:7.1px;color:#555;font-weight:400;">1500</div>
<div class="a" style="left:150.6px;top:432.1px;width:359.5px;height:1px;background:#e9e9e9;"></div>
<div class="t" style="left:126.2px;top:430.00px;font-size:7.1px;color:#555;font-weight:400;">1000</div>
<div class="a" style="left:156.30px;top:424.2px;width:24px;height:16.30px;background:linear-gradient(#5fadf1,#50bfe6 60px)"></div>
<div class="a" style="left:192.38px;top:420px;width:24px;height:20.50px;background:linear-gradient(#5fadf1,#50bfe6 60px)"></div>
<div class="a" style="left:228.46px;top:415.8px;width:24px;height:24.70px;background:linear-gradient(#5fadf1,#50bfe6 60px)"></div>
<div class="a" style="left:264.54px;top:411.6px;width:24px;height:28.90px;background:linear-gradient(#5fadf1,#50bfe6 60px)"></div>
<div class="a" style="left:300.62px;top:406.1px;width:24px;height:34.40px;background:linear-gradient(#5fadf1,#50bfe6 60px)"></div>
<div class="a" style="left:336.70px;top:400.5px;width:24px;height:40.00px;background:linear-gradient(#5fadf1,#50bfe6 60px)"></div>
<div class="a" style="left:372.78px;top:394.3px;width:24px;height:46.20px;background:linear-gradient(#5fadf1,#50bfe6 60px)"></div>
<div class="a" style="left:408.86px;top:388px;width:24px;height:52.50px;background:linear-gradient(#5fadf1,#50bfe6 60px)"></div>
<div class="a" style="left:444.94px;top:381.2px;width:24px;height:59.30px;background:linear-gradient(#5fadf1,#50bfe6 60px)"></div>
<div class="a" style="left:481.02px;top:374.5px;width:24px;height:66.00px;background:linear-gradient(#5fadf1,#50bfe6 60px)"></div>
<div class="a" style="left:602.5px;top:95px;width:7.5px;height:6px;background:#f4f4f4;border:1px solid #d8d8d8"></div>
<svg class="a" style="left:603.5px;top:96.5px;" width="6" height="4" viewBox="0 0 6 4"><path d="M0.8 3L3 0.8L5.2 3Z" fill="#888"/></svg>
<div class="a" style="left:603px;top:432.5px;width:7.5px;height:6px;background:#f4f4f4;border:1px solid #d8d8d8"></div>
<svg class="a" style="left:604px;top:434px;" width="6" height="4" viewBox="0 0 6 4"><path d="M0.8 1L3 3.2L5.2 1Z" fill="#888"/></svg>
<div class="a" style="left:611px;top:93px;width:156px;height:347px;background:#f1f1f1;"></div>
<div class="a" style="left:611px;top:93px;width:1px;height:347px;background:#d4d4d4;"></div>
<div class="a" style="left:743.5px;top:93px;width:1px;height:347px;background:#cfcfcf;"></div>
<div class="t" style="left:621px;top:99.00px;font-size:6.6px;color:#333;font-weight:700;">Междустрочный интервал</div>
<div class="a" style="left:620px;top:106.9px;width:51.3px;height:12.5px;background:#fff;border:1px solid #e0e0e0"></div>
<div class="t" style="left:623px;top:111.00px;font-size:6.6px;color:#444;font-weight:400;">Множитель</div>
<svg class="a" style="left:664px;top:111.5px;" width="5" height="3" viewBox="0 0 5 3"><path d="M0.5 0.5L2.5 2.5L4.5 0.5" fill="none" stroke="#999" stroke-width="0.7"/></svg>
<div class="a" style="left:679.6px;top:106.9px;width:49.5px;height:12.3px;background:#fff;border:1px solid #e0e0e0"></div>
<div class="t" style="left:707.5px;top:110.00px;font-size:7px;color:#444;font-weight:400;">1.3</div>
<svg class="a" style="left:721px;top:108px;" width="5" height="10" viewBox="0 0 5 10"><path d="M0.5 3L2.5 1L4.5 3M0.5 7L2.5 9L4.5 7" fill="none" stroke="#777" stroke-width="0.7"/></svg>
<div class="t" style="left:621px;top:125.00px;font-size:6.6px;color:#333;font-weight:700;">Интервал между абзацами</div>
<div class="t" style="left:621px;top:135.00px;font-size:6.9px;color:#444;font-weight:400;">Перед</div>
<div class="t" style="left:679.3px;top:135.00px;font-size:6.9px;color:#444;font-weight:400;">После</div>
<div class="a" style="left:620px;top:143.3px;width:51.3px;height:12px;background:#fff;border:1px solid #e0e0e0"></div>
<div class="t" style="left:645px;top:147.00px;font-size:6.9px;color:#444;font-weight:400;">0 см</div>
<svg class="a" style="left:664px;top:144.5px;" width="5" height="10" viewBox="0 0 5 10"><path d="M0.5 3L2.5 1L4.5 3M0.5 7L2.5 9L4.5 7" fill="none" stroke="#777" stroke-width="0.7"/></svg>
<div class="a" style="left:679.6px;top:143.3px;width:49.5px;height:12px;background:#fff;border:1px solid #e0e0e0"></div>
<div class="t" style="left:694.5px;top:147.00px;font-size:6.9px;color:#444;font-weight:400;">0.35 см</div>
<svg class="a" style="left:721px;top:144.5px;" width="5" height="10" viewBox="0 0 5 10"><path d="M0.5 3L2.5 1L4.5 3M0.5 7L2.5 9L4.5 7" fill="none" stroke="#777" stroke-width="0.7"/></svg>
<div class="a" style="left:744px;top:102px;width:23px;height:18.6px;background:#7e868e;"></div>
<div class="t" style="left:753px;top:107.00px;font-size:10px;color:#fff;font-weight:700;">¶</div>
<svg class="a" style="left:750.5px;top:131.5px;" width="11" height="8" viewBox="0 0 11 8"><g fill="none" stroke="#aaa" stroke-width="0.8"><rect x="0.6" y="0.6" width="9.6" height="6.6"/><path d="M0.6 2.9H10.2M0.6 5H10.2M3.8 0.6V7.2M7 0.6V7.2"/></g><rect x="0.6" y="0.6" width="9.6" height="2.3" fill="#aaa" opacity="0.6"/></svg>
<svg class="a" style="left:751px;top:153.5px;" width="10" height="10" viewBox="0 0 10 10"><g fill="none" stroke="#aaa" stroke-width="0.9"><rect x="0.6" y="0.6" width="8.4" height="8.4"/><path d="M0.6 7L3.5 4L6 6.5L9 3.5"/></g></svg>
<svg class="a" style="left:752px;top:176.5px;" width="8" height="11" viewBox="0 0 8 11"><rect x="0.6" y="0.6" width="6.8" height="9.6" fill="none" stroke="#aaa" stroke-width="0.9"/><rect x="0.6" y="0.6" width="6.8" height="1.8" fill="#aaa"/><rect x="0.6" y="8.4" width="6.8" height="1.8" fill="#aaa"/></svg>
<svg class="a" style="left:750.5px;top:199px;" width="12" height="12" viewBox="0 0 12 12"><g fill="none" stroke="#aaa" stroke-width="0.9"><path d="M0.6 0.6H6.5V4"/><path d="M0.6 0.6V6.5H3.8"/><circle cx="7.3" cy="7.3" r="3.6"/></g></svg>
<svg class="a" style="left:750.5px;top:222px;" width="11" height="11" viewBox="0 0 11 11"><g fill="none" stroke="#aaa" stroke-width="0.9"><rect x="0.6" y="6.5" width="2" height="3.3"/><rect x="4" y="4" width="2" height="5.8"/><rect x="7.4" y="1" width="2" height="8.8"/></g></svg>
<svg class="a" style="left:750.5px;top:243px;" width="12" height="13" viewBox="0 0 12 13"><g fill="none" stroke="#aaa" stroke-width="0.85"><path d="M0.8 1.2H5.5M3.1 1.2V7.5"/><path d="M5.8 4.3Q7.6 3.4 9.2 4.3V7.6M9.2 5.8Q6.8 5.5 6.4 6.7Q6.6 7.9 9.2 7.2"/><path d="M1.5 11.2Q6 8 10.5 11.2"/></g></svg>
<div class="a" style="left:1px;top:440px;width:766px;height:16px;background:#f1f1f1;"></div>
<div class="a" style="left:1px;top:440px;width:766px;height:1px;background:#d0d0d0;"></div>
<div class="a" style="left:0px;top:456px;width:770px;height:2px;background:#9a9a9a;"></div>
<div class="t" style="left:26.5px;top:445.00px;font-size:6.6px;color:#505050;font-weight:700;">Страница 7 из 13</div>
<div class="a" style="left:483.5px;top:441.5px;width:1px;height:13px;background:#d6d6d6;"></div>
<div class="t" style="left:492.8px;top:445.00px;font-size:6.6px;color:#505050;font-weight:700;">Русский (Россия)</div>
<svg class="a" style="left:551.5px;top:446.5px;" width="4" height="3" viewBox="0 0 4 3"><path d="M0.3 0.3L2 2L3.7 0.3" fill="none" stroke="#999" stroke-width="0.6"/></svg>
<svg class="a" style="left:562.5px;top:443px;" width="11" height="11" viewBox="0 0 11 11"><g fill="none" stroke="#555" stroke-width="1.2"><circle cx="5.3" cy="5.3" r="4.3"/><ellipse cx="5.3" cy="5.3" rx="1.8" ry="4.3"/><path d="M1 5.3H9.6"/></g><path d="M1.6 3.4H9M1.6 7.2H9" stroke="#555" stroke-width="0.8"/></svg>
<div class="t" style="left:582.3px;top:443.6px;font-size:4.4px;color:#555;font-weight:700;letter-spacing:-0.1px">ABC</div>
<svg class="a" style="left:585px;top:448.5px;" width="6" height="4" viewBox="0 0 6 4"><path d="M0.8 1.5L2.6 3.2L5.2 0.5" fill="none" stroke="#555" stroke-width="0.9"/></svg>
<div class="a" style="left:600.5px;top:441.5px;width:1px;height:13px;background:#d6d6d6;"></div>
<svg class="a" style="left:605px;top:443px;" width="11" height="11" viewBox="0 0 11 11"><g fill="none" stroke="#555" stroke-width="0.95"><path d="M7.5 1H1.2V9.8H8.6V6"/><path d="M3.8 7.6L4.3 5.6L8.8 1.1L10.1 2.4L5.6 6.9Z"/></g></svg>
<div class="a" style="left:619.5px;top:441.5px;width:1px;height:13px;background:#d6d6d6;"></div>
<svg class="a" style="left:629.5px;top:443px;" width="10" height="10" viewBox="0 0 10 10"><rect x="0.6" y="0.6" width="8.6" height="8.6" fill="none" stroke="#555" stroke-width="1"/><g fill="#555"><path d="M1.2 1.2L4 1.8L1.8 4Z"/><path d="M8.6 1.2L5.8 1.8L8 4Z"/><path d="M1.2 8.6L4 8L1.8 5.8Z"/><path d="M8.6 8.6L5.8 8L8 5.8Z"/></g></svg>
<svg class="a" style="left:647.5px;top:444px;" width="12" height="8" viewBox="0 0 12 8"><g fill="none" stroke="#555" stroke-width="0.9"><path d="M0.7 0.5V7.5M11.2 0.5V7.5M2.5 4H9.4"/><path d="M4 2.5L2.5 4L4 5.5M7.9 2.5L9.4 4L7.9 5.5"/></g></svg>
<div class="a" style="left:670px;top:447.7px;width:6px;height:1px;background:#555;"></div>
<div class="t" style="left:681px;top:445.00px;font-size:6.6px;color:#505050;font-weight:700;">Масштаб 100%</div>
<div class="a" style="left:734px;top:447.7px;width:7px;height:1px;background:#555;"></div>
<div class="a" style="left:737px;top:444.5px;width:1px;height:7px;background:#555;"></div>
<div class="a" style="left:473.5px;top:162px;width:257.5px;height:225.5px;background:#fff;border:1px solid #c8c8c8;border-radius:2px;box-shadow:0 2px 6px rgba(0,0,0,0.18);overflow:hidden"><div class="a" style="left:0;top:0;width:100%;height:20px;background:#f1f1f1;border-bottom:1px solid #dadada"></div></div>
<div class="t" style="left:568.6px;top:170.00px;font-size:7.72px;color:#5f5f5f;font-weight:400;-webkit-text-stroke:0.25px #777;">Параметры списка</div>
<svg class="a" style="left:717px;top:168.5px;" width="7" height="7" viewBox="0 0 7 7"><path d="M0.7 0.7L6.3 6.3M6.3 0.7L0.7 6.3" stroke="#555" stroke-width="1.05"/></svg>
<div class="t" style="left:483px;top:194.00px;font-size:6.6px;color:#444;font-weight:400;">Тип</div>
<div class="t" style="left:553px;top:194.00px;font-size:6.6px;color:#444;font-weight:400;">Выравнивание</div>
<div class="t" style="left:625.2px;top:194.00px;font-size:6.6px;color:#444;font-weight:400;">Размер</div>
<div class="t" style="left:695.3px;top:194.00px;font-size:6.6px;color:#444;font-weight:400;">Цвет</div>
<div class="a" style="left:483px;top:201.2px;width:63.5px;height:12.6px;background:#fff;border:1px solid #dcdcdc"></div>
<div class="t" style="left:485.6px;top:205.00px;font-size:6.6px;color:#444;font-weight:400;">Символ:</div>
<svg class="a" style="left:539.5px;top:205.8px;" width="5" height="3" viewBox="0 0 5 3"><path d="M0.5 0.5L2.5 2.5L4.5 0.5" fill="none" stroke="#999" stroke-width="0.7"/></svg>
<div class="a" style="left:512.6px;top:206px;width:4.2px;height:3.8px;border-radius:50%;border:0.75px solid #555"></div>
<div class="a" style="left:553px;top:201.2px;width:65.4px;height:12.6px;background:#fff;border:1px solid #dcdcdc"></div>
<div class="t" style="left:555.6px;top:205.00px;font-size:6.6px;color:#444;font-weight:400;">По левому краю</div>
<svg class="a" style="left:611.4px;top:205.8px;" width="5" height="3" viewBox="0 0 5 3"><path d="M0.5 0.5L2.5 2.5L4.5 0.5" fill="none" stroke="#999" stroke-width="0.7"/></svg>
<div class="a" style="left:625px;top:201.2px;width:63.6px;height:12.6px;background:#fff;border:1px solid #dcdcdc"></div>
<div class="t" style="left:627.6px;top:205.00px;font-size:6.6px;color:#444;font-weight:400;">Как текст</div>
<svg class="a" style="left:681.6px;top:205.8px;" width="5" height="3" viewBox="0 0 5 3"><path d="M0.5 0.5L2.5 2.5L4.5 0.5" fill="none" stroke="#999" stroke-width="0.7"/></svg>
<div class="a" style="left:695.3px;top:201.2px;width:26.5px;height:12.6px;background:#fff;border:1px solid #dcdcdc"></div>
<svg class="a" style="left:714.8px;top:205.8px;" width="5" height="3" viewBox="0 0 5 3"><path d="M0.5 0.5L2.5 2.5L4.5 0.5" fill="none" stroke="#999" stroke-width="0.7"/></svg>
<div class="a" style="left:714.5px;top:202.2px;width:1px;height:10.6px;background:#d8d8d8;"></div>
<div class="a" style="left:697.5px;top:203.5px;width:16px;height:8px;border:1px solid #e2e2e2"></div>
<div class="t" style="left:483px;top:222.00px;font-size:6.6px;color:#444;font-weight:400;">Уровень</div>
<div class="t" style="left:515px;top:222.00px;font-size:6.6px;color:#444;font-weight:400;">Просмотр</div>
<div class="a" style="left:483px;top:230.5px;width:25.7px;height:125px;background:#fff;border:1px solid #e0e0e0"></div>
<div class="a" style="left:484px;top:245.3px;width:24px;height:13.1px;background:#7e868e;"></div>
<div class="t" style="left:487.7px;top:235.00px;font-size:6.6px;color:#444;font-weight:400;">1</div>
<div class="t" style="left:487.7px;top:249.00px;font-size:6.6px;color:#fff;font-weight:700;">2</div>
<div class="t" style="left:487.7px;top:262.00px;font-size:6.6px;color:#444;font-weight:400;">3</div>
<div class="t" style="left:487.7px;top:276.00px;font-size:6.6px;color:#444;font-weight:400;">4</div>
<div class="t" style="left:487.7px;top:290.00px;font-size:6.6px;color:#444;font-weight:400;">5</div>
<div class="t" style="left:487.7px;top:304.00px;font-size:6.6px;color:#444;font-weight:400;">6</div>
<div class="t" style="left:487.7px;top:318.00px;font-size:6.6px;color:#444;font-weight:400;">7</div>
<div class="t" style="left:487.7px;top:332.00px;font-size:6.6px;color:#444;font-weight:400;">8</div>
<div class="t" style="left:487.7px;top:346.00px;font-size:6.6px;color:#444;font-weight:400;">9</div>
<div class="a" style="left:515px;top:230.3px;width:207px;height:125.2px;background:#fff;border:1px solid #e0e0e0"></div>
<div class="a" style="left:522.10px;top:236.40px;width:3.8px;height:3.8px;border-radius:50%;background:#000"></div>
<div class="a" style="left:535.7px;top:238.0px;width:179.89999999999998px;height:1.9px;background:#c6c6c6;"></div>
<div class="a" style="left:535.90px;top:248.90px;width:4.8px;height:4.8px;border-radius:50%;border:0.9px solid #222"></div>
<div class="a" style="left:549.7px;top:249.70000000000002px;width:166px;height:2.5px;background:#000;"></div>
<div class="a" style="left:549.7px;top:261.40000000000003px;width:166px;height:2.5px;background:#000;"></div>
<div class="a" style="left:550.2px;top:272.6px;width:3.2px;height:3.2px;background:#000;"></div>
<div class="a" style="left:563px;top:273.8px;width:152.60000000000002px;height:1.9px;background:#c6c6c6;"></div>
<div class="a" style="left:563.40px;top:284.30px;width:3.8px;height:3.8px;border-radius:50%;background:#000"></div>
<div class="a" style="left:577px;top:285.90000000000003px;width:138.60000000000002px;height:1.9px;background:#c6c6c6;"></div>
<div class="a" style="left:577.20px;top:297.30px;width:4.8px;height:4.8px;border-radius:50%;border:0.9px solid #222"></div>
<div class="a" style="left:591px;top:298.40000000000003px;width:124.60000000000002px;height:1.9px;background:#c6c6c6;"></div>
<div class="a" style="left:592.0px;top:308.4px;width:3.2px;height:3.2px;background:#000;"></div>
<div class="a" style="left:605px;top:309.6px;width:110.60000000000002px;height:1.9px;background:#c6c6c6;"></div>
<div class="a" style="left:604.90px;top:320.30px;width:3.8px;height:3.8px;border-radius:50%;background:#000"></div>
<div class="a" style="left:619px;top:321.90000000000003px;width:96.60000000000002px;height:1.9px;background:#c6c6c6;"></div>
<div class="a" style="left:619.20px;top:333.40px;width:4.8px;height:4.8px;border-radius:50%;border:0.9px solid #222"></div>
<div class="a" style="left:632.5px;top:334.5px;width:83.10000000000002px;height:1.9px;background:#c6c6c6;"></div>
<div class="a" style="left:633.5px;top:344.6px;width:3.2px;height:3.2px;background:#000;"></div>
<div class="a" style="left:646.5px;top:345.8px;width:69.10000000000002px;height:1.9px;background:#c6c6c6;"></div>
<div class="a" style="left:547.8px;top:364.9px;width:51.4px;height:13px;background:#7e868e;border-radius:1px"></div>
<div class="t" style="left:567.3px;top:369.00px;font-size:6.9px;color:#fff;font-weight:700;">OK</div>
<div class="a" style="left:605.7px;top:364.9px;width:51.2px;height:13px;background:#dadcde;border-radius:1px"></div>
<div class="t" style="left:619px;top:369.00px;font-size:6.6px;color:#333;font-weight:400;">Отмена</div>
</body></html>
